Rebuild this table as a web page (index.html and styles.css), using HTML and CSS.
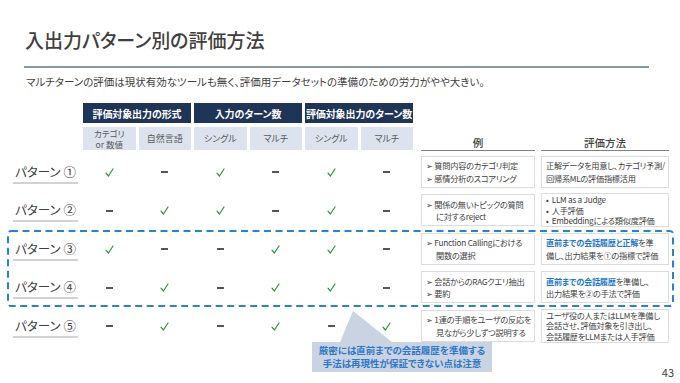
FILE: index.html
```html
<!DOCTYPE html>
<html lang="ja">
<head>
<meta charset="utf-8">
<link rel="stylesheet" href="styles.css">
</head>
<body>
<div class="slide">
  <h1 class="title">入出力パターン別の評価方法</h1>
  <div class="rule"></div>
  <p class="lead">マルチターンの評価は現状有効なツールも無く、評価用データセットの準備のための労力がやや大きい。</p>

  <div class="matrix">
    <div class="corner"></div>
    <div class="dark c2">評価対象出力の形式</div>
    <div class="dark c4">入力のターン数</div>
    <div class="dark c6">評価対象出力のターン数</div>

    <div class="light two"><span>カテゴリ<br>or 数値</span></div>
    <div class="light">自然言語</div>
    <div class="light">シングル</div>
    <div class="light">マルチ</div>
    <div class="light">シングル</div>
    <div class="light">マルチ</div>
    <div class="colhead ex">例</div>
    <div class="colhead ev">評価方法</div>

    <!-- row 1 -->
    <div class="label"><span>パターン ①</span></div>
    <div class="mark"><svg class="chk" viewBox="0 0 9 9"><path d="M1 5.2 L3.4 8 L8 1"/></svg></div>
    <div class="mark"><i class="dash"></i></div>
    <div class="mark"><svg class="chk" viewBox="0 0 9 9"><path d="M1 5.2 L3.4 8 L8 1"/></svg></div>
    <div class="mark"><i class="dash"></i></div>
    <div class="mark"><svg class="chk" viewBox="0 0 9 9"><path d="M1 5.2 L3.4 8 L8 1"/></svg></div>
    <div class="mark"><i class="dash"></i></div>
    <div class="box ex"><div class="li">➢ 質問内容のカテゴリ判定</div><div class="li">➢ 感情分析のスコアリング</div></div>
    <div class="box ev"><div>正解データを用意し、カテゴリ予測/</div><div>回帰系MLの評価指標活用</div></div>

    <!-- row 2 -->
    <div class="label"><span>パターン ②</span></div>
    <div class="mark"><i class="dash"></i></div>
    <div class="mark"><svg class="chk" viewBox="0 0 9 9"><path d="M1 5.2 L3.4 8 L8 1"/></svg></div>
    <div class="mark"><svg class="chk" viewBox="0 0 9 9"><path d="M1 5.2 L3.4 8 L8 1"/></svg></div>
    <div class="mark"><i class="dash"></i></div>
    <div class="mark"><svg class="chk" viewBox="0 0 9 9"><path d="M1 5.2 L3.4 8 L8 1"/></svg></div>
    <div class="mark"><i class="dash"></i></div>
    <div class="box ex"><div class="li">➢ 関係の無いトピックの質問</div><div class="li indent">に対するreject</div></div>
    <div class="box ev dense"><div>•&nbsp; LLM as a Judge</div><div>•&nbsp; 人手評価</div><div>•&nbsp; Embeddingによる類似度評価</div></div>

    <!-- row 3 -->
    <div class="label"><span>パターン ③</span></div>
    <div class="mark"><svg class="chk" viewBox="0 0 9 9"><path d="M1 5.2 L3.4 8 L8 1"/></svg></div>
    <div class="mark"><i class="dash"></i></div>
    <div class="mark"><i class="dash"></i></div>
    <div class="mark"><svg class="chk" viewBox="0 0 9 9"><path d="M1 5.2 L3.4 8 L8 1"/></svg></div>
    <div class="mark"><svg class="chk" viewBox="0 0 9 9"><path d="M1 5.2 L3.4 8 L8 1"/></svg></div>
    <div class="mark"><i class="dash"></i></div>
    <div class="box ex"><div class="li">➢ Function Callingにおける</div><div class="li indent">関数の選択</div></div>
    <div class="box ev"><div><b class="hl">直前までの会話履歴と正解</b>を準</div><div>備し、出力結果を①の指標で評価</div></div>

    <!-- row 4 -->
    <div class="label"><span>パターン ④</span></div>
    <div class="mark"><i class="dash"></i></div>
    <div class="mark"><svg class="chk" viewBox="0 0 9 9"><path d="M1 5.2 L3.4 8 L8 1"/></svg></div>
    <div class="mark"><i class="dash"></i></div>
    <div class="mark"><svg class="chk" viewBox="0 0 9 9"><path d="M1 5.2 L3.4 8 L8 1"/></svg></div>
    <div class="mark"><svg class="chk" viewBox="0 0 9 9"><path d="M1 5.2 L3.4 8 L8 1"/></svg></div>
    <div class="mark"><i class="dash"></i></div>
    <div class="box ex"><div class="li">➢ 会話からのRAGクエリ抽出</div><div class="li">➢ 要約</div></div>
    <div class="box ev"><div><b class="hl">直前までの会話履歴</b>を準備し、</div><div>出力結果を②の手法で評価</div></div>

    <!-- row 5 -->
    <div class="label"><span>パターン ⑤</span></div>
    <div class="mark"><i class="dash"></i></div>
    <div class="mark"><svg class="chk" viewBox="0 0 9 9"><path d="M1 5.2 L3.4 8 L8 1"/></svg></div>
    <div class="mark"><i class="dash"></i></div>
    <div class="mark"><svg class="chk" viewBox="0 0 9 9"><path d="M1 5.2 L3.4 8 L8 1"/></svg></div>
    <div class="mark"><i class="dash"></i></div>
    <div class="mark"><svg class="chk" viewBox="0 0 9 9"><path d="M1 5.2 L3.4 8 L8 1"/></svg></div>
    <div class="box ex"><div class="li">➢ 1連の手順をユーザの反応を</div><div class="li indent">見ながら少しずつ説明する</div></div>
    <div class="box ev dense"><div>ユーザ役の人またはLLMを準備し</div><div>会話させ、評価対象を引き出し、</div><div>会話履歴をLLMまたは人手評価</div></div>
  </div>

  <div class="page-no">43</div>

  <svg class="focus" viewBox="0 0 667 77" width="667" height="77"><rect x="1" y="1" width="665" height="75" rx="3"/></svg>
  <div class="callout">厳密には直前までの会話履歴を準備する<br>手法は再現性が保証できない点は注意</div>
</div>
</body>
</html>
```

FILE: styles.css
```css
* { box-sizing: border-box; }
html, body { margin: 0; padding: 0; background: #fff; }
body {
  font-family: "Noto Sans CJK JP", "Noto Sans", sans-serif;
  color: #404040;
  font-feature-settings: "palt";
}
.slide {
  position: relative;
  width: 680px;
  height: 383px;
  overflow: hidden;
  padding-top: 28px;
}
.title {
  margin: 0 0 0 25px;
  font-size: 19px;
  line-height: 24px;
  font-weight: 500;
  color: #3f3f3f;
}
.rule {
  margin: 14px 0 0 24px;
  width: 625px;
  height: 2px;
  background: #8896a8;
}
.lead {
  margin: 7px 0 0 26px;
  font-size: 10.5px;
  line-height: 14px;
  color: #404040;
}
.matrix {
  margin: 14px 0 0 10px;
  display: grid;
  grid-template-columns: 70px repeat(6, 52.5px) 119px 131px;
  grid-template-rows: 24px 26px repeat(5, 38.5px);
  column-gap: 3px;
}
.corner { grid-column: 1; grid-row: 1 / span 2; }
.dark {
  grid-row: 1;
  height: 20px;
  background: #1f3557;
  color: #fff;
  font-weight: 700;
  font-size: 10px;
  letter-spacing: -0.1px;
  white-space: nowrap;
  display: flex;
  align-items: center;
  justify-content: center;
}
.dark.c2 { grid-column: 2 / span 2; }
.dark.c4 { grid-column: 4 / span 2; }
.dark.c6 { grid-column: 6 / span 2; }
.light {
  grid-row: 2;
  height: 23px;
  background: #dce3ee;
  color: #595959;
  font-size: 9px;
  line-height: 10px;
  display: flex;
  align-items: center;
  justify-content: center;
  text-align: center;
}
.light.two { font-size: 8.5px; line-height: 11px; }
.colhead {
  grid-row: 2;
  align-self: end;
  margin-bottom: 2px;
  border-bottom: 1px solid #7f7f7f;
  text-align: center;
  font-size: 10.5px;
  line-height: 14px;
  font-weight: 500;
  color: #404040;
}
.colhead.ex, .box.ex { grid-column: 8; margin-left: 5px; }
.colhead.ev, .box.ev { grid-column: 9; margin-left: 3px; }

.label {
  grid-column: 1;
  display: flex;
  align-items: center;
  padding-top: 3px;
}
.label span {
  display: block;
  margin-left: 3px;
  width: 65px;
  text-align: center;
  font-size: 12.5px;
  line-height: 16px;
  padding-bottom: 2px;
  border-bottom: 2px solid #d2d2d2;
  color: #404040;
}
.mark {
  display: flex;
  align-items: center;
  justify-content: center;
}
.chk { width: 9px; height: 9px; }
.chk path { fill: none; stroke: #2f8f3a; stroke-width: 1.2; stroke-linecap: round; stroke-linejoin: round; }
.dash { display: block; width: 7px; height: 1.6px; background: #555; }

.box {
  margin-top: 2.5px;
  margin-bottom: 4px;
  border: 1px solid #dcdcdc;
  background: #fff;
  padding: 0 3px 0 4px;
  display: flex;
  flex-direction: column;
  justify-content: center;
  font-size: 8.2px;
  letter-spacing: -0.25px;
  line-height: 12.5px;
  color: #404040;
  white-space: nowrap;
}
.box.dense { line-height: 10.6px; margin-top: 1.5px; margin-bottom: 3px; }
.li.indent { padding-left: 10px; }
.hl { color: #1f77d0; font-weight: 700; }

.page-no {
  margin: 19px 6px 0 0;
  text-align: right;
  font-size: 11px;
  line-height: 14px;
  color: #404040;
}

.focus {
  position: absolute;
  left: 7px;
  top: 230px;
}
.focus rect {
  fill: none;
  stroke: #2483d4;
  stroke-width: 2;
  stroke-dasharray: 7 4.5;
}
.callout {
  position: absolute;
  left: 312px;
  top: 342px;
  width: 180px;
  height: 30px;
  background: #c9d3e1;
  color: #2f78c8;
  font-weight: 700;
  font-size: 9.5px;
  line-height: 13px;
  text-align: center;
  padding-top: 2px;
}
.callout::before {
  content: "";
  position: absolute;
  left: 24px;
  top: -31px;
  width: 56px;
  height: 31px;
  background: #c9d3e1;
  clip-path: polygon(17px 0, 4px 100%, 56px 100%);
}
```
